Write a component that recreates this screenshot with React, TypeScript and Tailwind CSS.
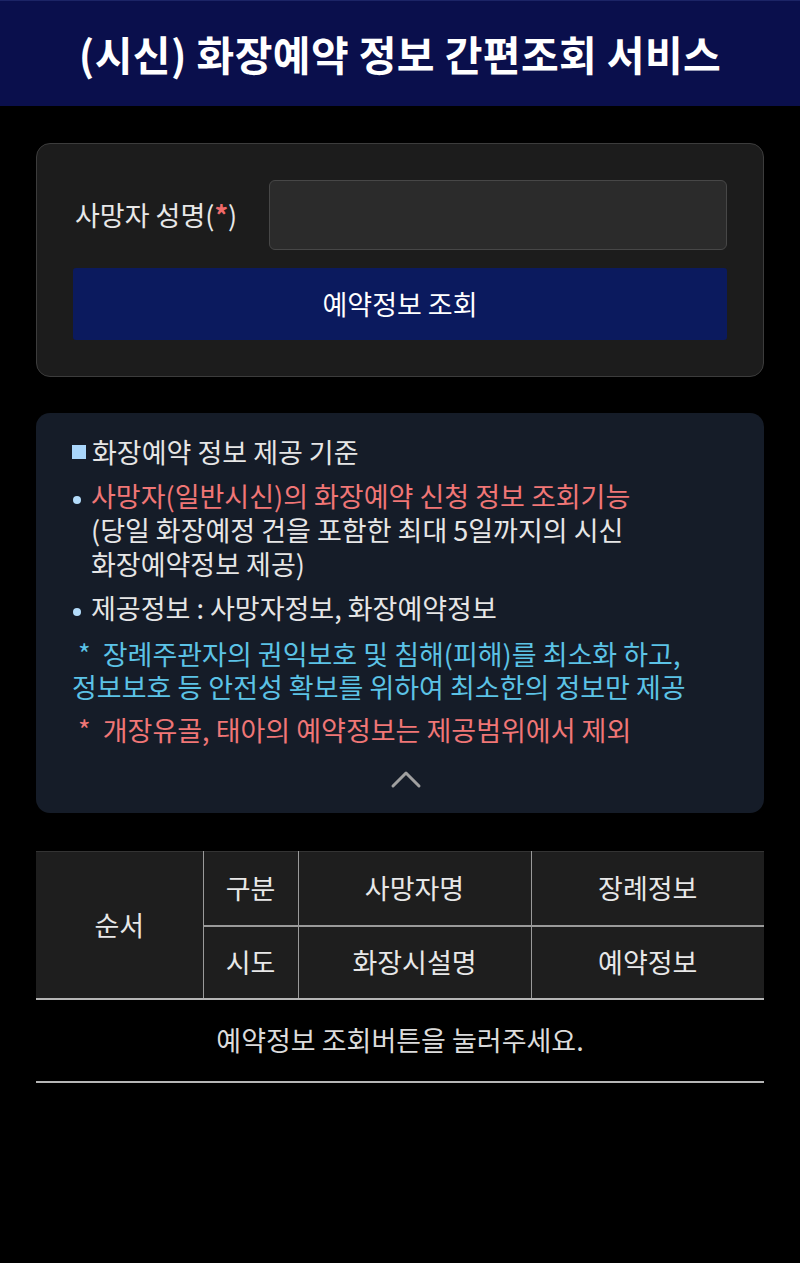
import React, { useState } from 'react';

const FONT = { fontFamily: '"Noto Sans CJK KR", "Noto Sans", sans-serif' };

export default function App() {
    const [name, setName] = useState('');
    const [open, setOpen] = useState(true);

    return (
        <div className="min-h-[1263px] w-full bg-black text-[#e6e6e6]" style={FONT}>
            <header className="h-[106px] bg-[#0a0f4c] border-t border-[#1c2466] flex items-center justify-center">
                <h1 className="text-[41px] font-bold text-white tracking-[0.4px]">(시신) 화장예약 정보 간편조회 서비스</h1>
            </header>

            <main className="px-[36px] pt-[37px]">
                {/* 조회 폼 */}
                <section className="bg-[#1c1c1c] border border-[#3c3c3c] rounded-[14px] px-[36px] py-[36px]">
                    <div className="flex items-center">
                        <label className="w-[196px] pl-[2px] text-[27px] text-[#e8e8e8]">
                            사망자 성명(<span className="text-[#f06a6a] font-bold">*</span>)
                        </label>
                        <input
                            value={name}
                            onChange={e => setName(e.target.value)}
                            className="flex-1 h-[70px] bg-[#2b2b2b] border border-[#474747] rounded-[6px] px-4 text-[24px] text-white outline-none"
                        />
                    </div>
                    <button className="mt-[18px] w-full h-[72px] bg-[#0b1a5e] rounded-[3px] text-[27px] text-white">
                        예약정보 조회
                    </button>
                </section>

                {/* 안내 */}
                <section className="mt-[36px] bg-[#151c28] rounded-[14px] pl-[36px] pr-[24px] pt-[22px] pb-[22px] text-[27px] leading-[34px]">
                    <div className="flex items-center text-[#e6e6e6]">
                        <span className="inline-block w-[14px] h-[14px] bg-[#a9d6fb] mr-[6px]" />
                        화장예약 정보 제공 기준
                    </div>
                    {open && (
                        <>
                            <div className="mt-[10px] flex">
                                <span className="w-[19px] shrink-0 flex items-start pt-[17px] pl-[1px]">
                                    <span className="inline-block w-[8px] h-[8px] rounded-full bg-[#b3dbfa]" />
                                </span>
                                <div>
                                    <div className="text-[#f07676] whitespace-nowrap">사망자(일반시신)의 화장예약 신청 정보 조회기능</div>
                                    <div className="text-[#e6e6e6] whitespace-nowrap">(당일 화장예정 건을 포함한 최대 5일까지의 시신</div>
                                    <div className="text-[#e6e6e6] whitespace-nowrap">화장예약정보 제공)</div>
                                </div>
                            </div>
                            <div className="mt-[10px] flex">
                                <span className="w-[19px] shrink-0 flex items-start pt-[17px] pl-[1px]">
                                    <span className="inline-block w-[8px] h-[8px] rounded-full bg-[#b3dbfa]" />
                                </span>
                                <div className="text-[#e6e6e6] whitespace-nowrap">제공정보 : 사망자정보, 화장예약정보</div>
                            </div>
                            <div className="mt-[12px] text-[#5cc3e6] whitespace-nowrap leading-[33px]">
                                <div>&nbsp;*&nbsp; 장례주관자의 권익보호 및 침해(피해)를 최소화 하고,</div>
                                <div>정보보호 등 안전성 확보를 위하여 최소한의 정보만 제공</div>
                            </div>
                            <div className="mt-[10px] text-[#f07676] whitespace-nowrap">&nbsp;*&nbsp; 개장유골, 태아의 예약정보는 제공범위에서 제외</div>
                        </>
                    )}
                    <button onClick={() => setOpen(o => !o)} className="mt-[20px] mx-auto block w-[40px] h-[24px]" aria-label="접기">
                        <svg viewBox="0 0 40 24" className="w-[40px] h-[24px]" fill="none" stroke="#a0a0a0" strokeWidth="3" strokeLinecap="round" strokeLinejoin="round">
                            <polyline points="7,19 20,6 33,19" />
                        </svg>
                    </button>
                </section>

                {/* 결과 테이블 */}
                <table className="mt-[38px] w-full border-collapse text-[27px] text-[#e8e8e8]">
                    <colgroup>
                        <col className="w-[167px]" />
                        <col className="w-[95px]" />
                        <col className="w-[233px]" />
                        <col className="w-[233px]" />
                    </colgroup>
                    <thead className="bg-[#1e1e1e]">
                        <tr className="h-[74px] border-t border-[#333]">
                            <th rowSpan={2} className="font-normal border-r border-[#9a9a9a] border-b-2 border-b-[#b5b5b5]">순서</th>
                            <th className="font-normal border-r border-[#9a9a9a] border-b-2 border-b-[#9a9a9a]">구분</th>
                            <th className="font-normal border-r border-[#9a9a9a] border-b-2 border-b-[#9a9a9a]">사망자명</th>
                            <th className="font-normal border-b-2 border-b-[#9a9a9a]">장례정보</th>
                        </tr>
                        <tr className="h-[73px]">
                            <th className="font-normal border-r border-[#9a9a9a] border-b-2 border-b-[#b5b5b5]">시도</th>
                            <th className="font-normal border-r border-[#9a9a9a] border-b-2 border-b-[#b5b5b5]">화장시설명</th>
                            <th className="font-normal border-b-2 border-b-[#b5b5b5]">예약정보</th>
                        </tr>
                    </thead>
                    <tbody>
                        <tr className="h-[83px] border-b-2 border-[#b5b5b5]">
                            <td colSpan={4} className="text-center text-[#dcdcdc]">예약정보 조회버튼을 눌러주세요.</td>
                        </tr>
                    </tbody>
                </table>
            </main>
        </div>
    );
}
